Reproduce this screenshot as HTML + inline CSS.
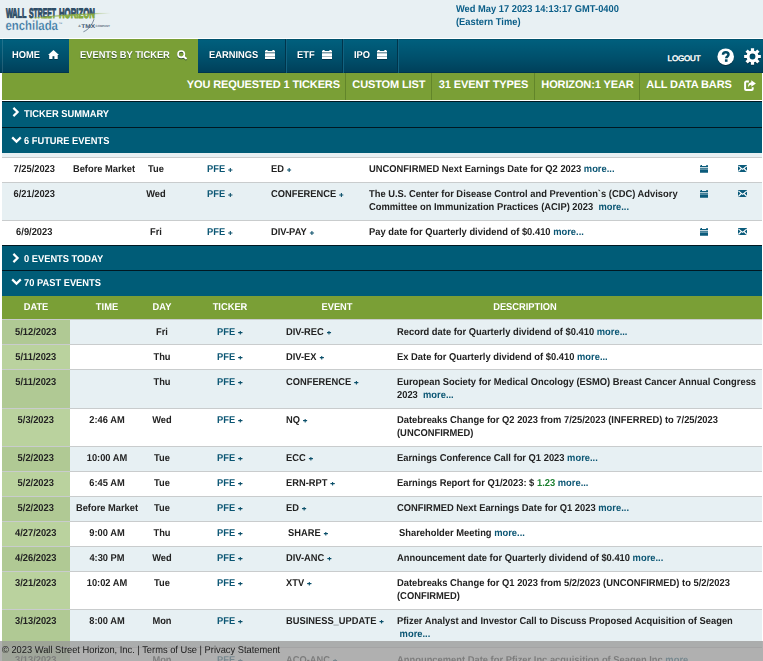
<!DOCTYPE html>
<html>
<head>
<meta charset="utf-8">
<title>Enchilada - Events By Ticker</title>
<style>
*{box-sizing:border-box;}
html,body{margin:0;padding:0;}
body{width:763px;height:661px;overflow:hidden;background:#fff;font-family:"Liberation Sans",sans-serif;font-size:10px;color:#222;position:relative;font-weight:bold;text-rendering:geometricPrecision;}
div,span{white-space:nowrap;}
#hdr{position:absolute;left:0;top:0;width:763px;height:38px;background:#e8f0f3;}
#clock{position:absolute;left:456.3px;top:3px;color:#0a5e88;line-height:13px;transform:scaleX(.931);transform-origin:0 0;}
#nav{position:absolute;left:0;top:39px;width:763px;height:34px;background:linear-gradient(#00607e 0%,#00506c 55%,#003f59 100%);box-shadow:inset 0 1px 0 rgba(0,40,60,.25),inset 0 -1px 0 rgba(0,30,50,.3);}
#nav .edge{display:none;}
.tab{position:absolute;top:0;height:34px;color:#fff;line-height:31px;text-shadow:0 1px 1px rgba(0,30,45,.55);}
.tab i{position:absolute;right:-1px;top:0;width:2px;height:34px;background:linear-gradient(90deg,#00354b 50%,#126381 50%);}
.tab.act{background:#7a9f36;}
.tab i.l{left:0;right:auto;width:1px;background:rgba(255,255,255,.13);}
.nt{position:absolute;top:11px;color:#fff;line-height:11px;transform:scaleX(.931);transform-origin:0 0;text-shadow:0 1px 1px rgba(0,30,45,.55);}
#nav svg{filter:drop-shadow(0 1px 0.5px rgba(0,30,45,.55));}
#sub{position:absolute;left:2px;top:73px;width:760px;height:27px;background:#7a9f36;}
.st{position:absolute;top:0;height:27px;line-height:25px;color:#fff;font-size:11px;letter-spacing:-0.12px;margin-left:-0.7px;}
.sv{position:absolute;top:0;width:1px;height:27px;background:#62852a;}
.sec{position:absolute;left:2px;width:760px;background:#005c77;color:#fff;border-top:1px solid #001822;}
.sec span{position:absolute;margin-top:1px;left:22.1px;transform:scaleX(.931);transform-origin:0 0;}
.sec svg{position:absolute;}
.row{position:absolute;left:2px;width:760px;background:#fff;line-height:13px;color:#222;}
.row.alt{background:#e7f0f3;}
.row .bd{position:absolute;left:0;right:0;top:0;height:1px;background:#c9cccd;}
.c{position:absolute;margin-top:1px;transform:scaleX(.931);transform-origin:0 0;}
.cc{position:absolute;margin-top:1px;text-align:center;transform:scaleX(.931);transform-origin:50% 0;}
.c.ds{transform:scaleX(.936);}
.ic{position:absolute;}
.dcell{position:absolute;left:0;top:0;bottom:0;width:68px;background:#bad29e;}
.row.alt .dcell{background:#b0c994;}
.lk{color:#0a5573;}
.pl{display:inline-block;width:5.2px;height:4px;margin-left:3px;background:#0a4f6a;vertical-align:0.4px;clip-path:polygon(0 50%,12% 35%,39% 35%,39% 0,61% 0,61% 35%,88% 35%,100% 50%,88% 65%,61% 65%,61% 100%,39% 100%,39% 65%,12% 65%);}
#thead{position:absolute;left:2px;top:296px;width:760px;height:23px;background:#7a9f36;color:#fff;line-height:22px;}
#foot{position:absolute;left:0;top:641px;width:763px;height:20px;background:rgba(152,152,152,0.77);color:#1a1a1a;font-weight:normal;line-height:19px;padding-left:2px;}
#foot span{display:inline-block;transform:scaleX(.931);transform-origin:0 0;}
</style>
</head>
<body>
<div id="hdr">
<svg id="logo" style="position:absolute;left:0;top:0" width="130" height="38" viewBox="0 0 130 38" font-family="Liberation Sans, sans-serif" letter-spacing="0">
<defs>
<clipPath id="below"><path d="M30 18.2C50 16.4 75 14.2 112 13.5V20H30Z"/></clipPath>
<clipPath id="above"><path d="M0 0H130V13.4C80 14.2 50 16.4 30 18.2H0Z"/></clipPath>
<linearGradient id="sw" x1="0" x2="1" y1="0" y2="0"><stop offset="0" stop-color="#8aad45" stop-opacity="0.5"/><stop offset="0.45" stop-color="#8aad45" stop-opacity="1"/><stop offset="0.8" stop-color="#8aad45" stop-opacity="0.8"/><stop offset="1" stop-color="#8aad45" stop-opacity="0"/></linearGradient>
</defs>
<g font-weight="bold" font-size="13.8" stroke-width="1.0" stroke-linejoin="round">
<g clip-path="url(#above)" fill="#2f4d66" stroke="#2f4d66">
<text x="5.9" y="17.8" textLength="20.6" lengthAdjust="spacingAndGlyphs">WALL</text>
<text x="28.9" y="17.8" textLength="27.1" lengthAdjust="spacingAndGlyphs">STREET</text>
<text x="59" y="17.8" textLength="35.9" lengthAdjust="spacingAndGlyphs">HORIZON</text>
</g>
<g clip-path="url(#below)" fill="#84aa3c" stroke="#84aa3c">
<text x="28.9" y="17.8" textLength="27.1" lengthAdjust="spacingAndGlyphs">STREET</text>
<text x="59" y="17.8" textLength="35.9" lengthAdjust="spacingAndGlyphs">HORIZON</text>
</g>
</g>
<path d="M33 17.9C52 15.4 78 13.3 111 13.2C80 14.6 55 16.6 33 17.9Z" fill="url(#sw)" stroke="url(#sw)" stroke-width="0.25"/>
<text x="5.5" y="29.5" font-size="13.4" fill="#2f6f9c" stroke="#e8f0f3" stroke-width="0.3" textLength="52.4" lengthAdjust="spacingAndGlyphs">enchilada</text>
<text x="58.8" y="24" font-size="2.2" fill="#6a94b4">TM</text>
<g fill="#5a6e80">
<text x="78.3" y="27.2" font-size="3.4">A</text>
<text x="81.3" y="27.5" font-size="5.6" font-weight="bold" textLength="13.8" lengthAdjust="spacingAndGlyphs" fill="#3f5872">TMX</text>
<text x="95.6" y="26.8" font-size="3.1" textLength="14.4" lengthAdjust="spacingAndGlyphs">COMPANY</text>
</g>
<path d="M94 19.2C92.5 24 89 29.5 83.4 31.8" stroke="#2d4560" stroke-width="0.6" fill="none"/>
</svg>

<div id="clock">Wed May 17 2023 14:13:17 GMT-0400<br>(Eastern Time)</div>
</div>
<div id="nav"><div class="edge"></div>
<div class="tab" style="left:2px;width:67px"><i class="l"></i></div>
<div class="tab act" style="left:69px;width:129px"></div>
<div class="tab" style="left:198px;width:88px"><i></i></div>
<div class="tab" style="left:287px;width:56px"><i></i></div>
<div class="tab" style="left:344px;width:54px"><i></i></div>
<span class="nt" style="left:12.3px">HOME</span><svg class="ic" style="left:48px;top:11px" width="11" height="9" viewBox="0 0 11 9"><path fill="#fff" d="M5.5 0L0 4.9h1.2V9h3.3V6.2h1.9V9h3.3V4.9H11z"/></svg>
<span class="nt" style="left:79.5px">EVENTS BY TICKER</span><svg class="ic" style="left:177px;top:10.5px" width="11" height="11" viewBox="0 0 11 11"><circle cx="4.2" cy="4.2" r="3.2" stroke="#fff" stroke-width="1.6" fill="none"/><path d="M6.6 6.4L9.0 8.4" stroke="#fff" stroke-width="1.9" stroke-linecap="round"/></svg>
<span class="nt" style="left:208.7px">EARNINGS</span><svg class="ic" style="left:265px;top:11px" width="10" height="9" viewBox="0 0 10 9"><path fill="#fff" d="M0 1h0.6v-1h2v1h4.8v-1h2v1h0.6v1.5h-10zM0 3.2h10v3h-10zM0 6.7h10v2.5h-10z"/><rect y="6.2" width="10" height="0.5" fill="#cfdde3"/></svg>
<span class="nt" style="left:297px">ETF</span><svg class="ic" style="left:321.7px;top:11px" width="10" height="9" viewBox="0 0 10 9"><path fill="#fff" d="M0 1h0.6v-1h2v1h4.8v-1h2v1h0.6v1.5h-10zM0 3.2h10v3h-10zM0 6.7h10v2.5h-10z"/><rect y="6.2" width="10" height="0.5" fill="#cfdde3"/></svg>
<span class="nt" style="left:353.7px">IPO</span><svg class="ic" style="left:377px;top:11px" width="10" height="9" viewBox="0 0 10 9"><path fill="#fff" d="M0 1h0.6v-1h2v1h4.8v-1h2v1h0.6v1.5h-10zM0 3.2h10v3h-10zM0 6.7h10v2.5h-10z"/><rect y="6.2" width="10" height="0.5" fill="#cfdde3"/></svg>
<span class="nt" style="left:667.6px;top:14px;font-size:8px;font-weight:normal;letter-spacing:-0.15px;transform:none;-webkit-text-stroke:0.45px #fff">LOGOUT</span>
<svg class="ic" style="left:717.3px;top:8.9px" width="17.4" height="17.4" viewBox="0 0 18 18"><circle cx="9" cy="9" r="8.6" fill="#fff"/><path d="M6.2 7.1c0-1.7 1.2-2.7 2.9-2.7 1.6 0 2.8 1 2.8 2.4 0 1.9-2.3 2-2.3 3.7" stroke="#024a64" stroke-width="2.6" fill="none"/><rect x="8.2" y="11.7" width="2.7" height="2.6" fill="#024a64"/></svg>
<svg class="ic" style="left:744.3px;top:8.5px" width="17" height="17" viewBox="0 0 17 17"><path fill="#fff" fill-rule="evenodd" d="M6.89 0.15L10.11 0.15L10.10 2.72L11.46 3.28L13.27 1.46L15.54 3.73L13.72 5.54L14.28 6.90L16.85 6.89L16.85 10.11L14.28 10.10L13.72 11.46L15.54 13.27L13.27 15.54L11.46 13.72L10.10 14.28L10.11 16.85L6.89 16.85L6.90 14.28L5.54 13.72L3.73 15.54L1.46 13.27L3.28 11.46L2.72 10.10L0.15 10.11L0.15 6.89L2.72 6.90L3.28 5.54L1.46 3.73L3.73 1.46L5.54 3.28L6.90 2.72ZM11.4 8.5a2.9 2.9 0 1 0 -5.8 0a2.9 2.9 0 1 0 5.8 0Z"/></svg>
</div>
<div id="sub">
<div class="st" style="left:185.5px">YOU REQUESTED 1 TICKERS</div><div class="sv" style="left:343px"></div>
<div class="st" style="left:351px">CUSTOM LIST</div><div class="sv" style="left:429px"></div>
<div class="st" style="left:437.5px">31 EVENT TYPES</div><div class="sv" style="left:532px"></div>
<div class="st" style="left:540px">HORIZON:1 YEAR</div><div class="sv" style="left:637px"></div>
<div class="st" style="left:645px">ALL DATA BARS</div>
<svg class="ic" style="left:742.2px;top:7.4px" width="12" height="11" viewBox="0 0 12 11"><path d="M8.7 7.2v1.7a1 1 0 0 1 -1 1H2.1a1 1 0 0 1 -1 -1V2.6a1 1 0 0 1 1 -1h2.8" stroke="#fff" stroke-width="2" fill="none"/><path fill="#fff" d="M7.3 0.2L11.9 3.5L7.3 6.8V4.7C5.6 4.7 4.9 5.6 4.4 7.4C3.6 4.6 5.2 2.4 7.3 2.3z"/></svg>
</div>
<div class="sec" style="top:101px;height:26px;line-height:11px"><svg style="left:10.3px;top:5.4px" width="8" height="10" viewBox="0 0 8 10"><path d="M1.4 0.9L5.6 5L1.4 9.1" stroke="#fff" stroke-width="2.2" fill="none"/></svg><span style="top:5.9px">TICKER SUMMARY</span></div>
<div class="sec" style="top:127px;height:26px;line-height:11px"><svg style="left:8.8px;top:7.8px" width="11" height="8" viewBox="0 0 11 8"><path d="M1.2 1.4L5.5 5.6L9.8 1.4" stroke="#fff" stroke-width="2.2" fill="none"/></svg><span style="top:7.1px">6 FUTURE EVENTS</span></div>
<div style="position:absolute;left:2px;top:153px;width:760px;height:4px;background:#e8f0f3"></div>
<div class="row" style="top:157px;height:25px">
<div class="cc" style="left:0;width:64.5px;top:5.4px">7/25/2023</div>
<div class="cc" style="left:52px;width:100px;top:5.4px">Before Market</div>
<div class="cc" style="left:124px;width:60px;top:5.4px">Tue</div>
<div class="c lk" style="left:204.7px;top:5.4px">PFE<span class="pl"></span></div>
<div class="c" style="left:268.5px;top:5.4px">ED<span class="pl"></span></div>
<div class="c ds" style="left:366.5px;top:5.4px">UNCONFIRMED Next Earnings Date for Q2 2023 <span class="lk">more...</span></div>
<svg class="ic" style="left:697.9px;top:8px" width="8.3" height="7.9" viewBox="0 0 8.3 7.9"><path fill="#0b5b7b" d="M0 1h0.5v-1h1.5v1h4.3v-1h1.5v1h0.5v1.2h-8.3zM0 3.25h8.3v1.15h-8.3zM0 5h8.3v2.8h-8.3z"/><rect y="4.4" width="8.3" height="0.6" fill="#0b5b7b" opacity="0.55"/></svg>
<svg class="ic" style="left:736.2px;top:7.9px" width="9.3" height="7.1" viewBox="0 0 9.3 7.1"><rect width="9.3" height="7.1" fill="#0b5b7b"/><path d="M0.4 0.8L4.65 4.4L8.9 0.8M0.4 6.5L3.3 3.5M8.9 6.5L6 3.5" stroke="#fff" stroke-width="1.1" fill="none"/></svg>
<div class="bd"></div>
</div>
<div class="row alt" style="top:182px;height:38px">
<div class="cc" style="left:0;width:64.5px;top:5.4px">6/21/2023</div>
<div class="cc" style="left:52px;width:100px;top:5.4px"></div>
<div class="cc" style="left:124px;width:60px;top:5.4px">Wed</div>
<div class="c lk" style="left:204.7px;top:5.4px">PFE<span class="pl"></span></div>
<div class="c" style="left:268.5px;top:5.4px">CONFERENCE<span class="pl"></span></div>
<div class="c ds" style="left:366.5px;top:5.4px">The U.S. Center for Disease Control and Prevention`s (CDC) Advisory<br>Committee on Immunization Practices (ACIP) 2023 &nbsp;<span class="lk">more...</span></div>
<svg class="ic" style="left:697.9px;top:8px" width="8.3" height="7.9" viewBox="0 0 8.3 7.9"><path fill="#0b5b7b" d="M0 1h0.5v-1h1.5v1h4.3v-1h1.5v1h0.5v1.2h-8.3zM0 3.25h8.3v1.15h-8.3zM0 5h8.3v2.8h-8.3z"/><rect y="4.4" width="8.3" height="0.6" fill="#0b5b7b" opacity="0.55"/></svg>
<svg class="ic" style="left:736.2px;top:7.9px" width="9.3" height="7.1" viewBox="0 0 9.3 7.1"><rect width="9.3" height="7.1" fill="#0b5b7b"/><path d="M0.4 0.8L4.65 4.4L8.9 0.8M0.4 6.5L3.3 3.5M8.9 6.5L6 3.5" stroke="#fff" stroke-width="1.1" fill="none"/></svg>
<div class="bd"></div>
</div>
<div class="row" style="top:220px;height:25px">
<div class="cc" style="left:0;width:64.5px;top:5.4px">6/9/2023</div>
<div class="cc" style="left:52px;width:100px;top:5.4px"></div>
<div class="cc" style="left:124px;width:60px;top:5.4px">Fri</div>
<div class="c lk" style="left:204.7px;top:5.4px">PFE<span class="pl"></span></div>
<div class="c" style="left:268.5px;top:5.4px">DIV-PAY<span class="pl"></span></div>
<div class="c ds" style="left:366.5px;top:5.4px">Pay date for Quarterly dividend of $0.410 <span class="lk">more...</span></div>
<svg class="ic" style="left:697.9px;top:8px" width="8.3" height="7.9" viewBox="0 0 8.3 7.9"><path fill="#0b5b7b" d="M0 1h0.5v-1h1.5v1h4.3v-1h1.5v1h0.5v1.2h-8.3zM0 3.25h8.3v1.15h-8.3zM0 5h8.3v2.8h-8.3z"/><rect y="4.4" width="8.3" height="0.6" fill="#0b5b7b" opacity="0.55"/></svg>
<svg class="ic" style="left:736.2px;top:7.9px" width="9.3" height="7.1" viewBox="0 0 9.3 7.1"><rect width="9.3" height="7.1" fill="#0b5b7b"/><path d="M0.4 0.8L4.65 4.4L8.9 0.8M0.4 6.5L3.3 3.5M8.9 6.5L6 3.5" stroke="#fff" stroke-width="1.1" fill="none"/></svg>
<div class="bd"></div>
</div>
<div class="sec" style="top:245px;height:25px;line-height:11px"><svg style="left:10.3px;top:6.5px" width="8" height="10" viewBox="0 0 8 10"><path d="M1.4 0.9L5.6 5L1.4 9.1" stroke="#fff" stroke-width="2.2" fill="none"/></svg><span style="top:7.0px">0 EVENTS TODAY</span></div>
<div class="sec" style="top:270px;height:26px;line-height:11px"><svg style="left:8.8px;top:6.8px" width="11" height="8" viewBox="0 0 11 8"><path d="M1.2 1.4L5.5 5.6L9.8 1.4" stroke="#fff" stroke-width="2.2" fill="none"/></svg><span style="top:6.1px">70 PAST EVENTS</span></div>
<div id="thead">
<div class="cc" style="left:-16.5px;width:100px;top:0">DATE</div>
<div class="cc" style="left:55px;width:100px;top:0">TIME</div>
<div class="cc" style="left:109.5px;width:100px;top:0">DAY</div>
<div class="cc" style="left:178px;width:100px;top:0">TICKER</div>
<div class="cc" style="left:284.5px;width:100px;top:0">EVENT</div>
<div class="cc" style="left:473px;width:100px;top:0">DESCRIPTION</div>
</div>
<div class="row alt" style="top:319px;height:25px">
<div class="dcell"></div>
<div class="cc" style="left:0;width:67.5px;top:6px">5/12/2023</div>
<div class="cc" style="left:55px;width:100px;top:6px"></div>
<div class="cc" style="left:129.5px;width:60px;top:6px">Fri</div>
<div class="c lk" style="left:215px;top:6px">PFE<span class="pl"></span></div>
<div class="c" style="left:284.2px;top:6px">DIV-REC<span class="pl"></span></div>
<div class="c ds" style="left:395.1px;top:6px">Record date for Quarterly dividend of $0.410 <span class="lk">more...</span></div>
<div class="bd"></div>
</div>
<div class="row" style="top:344px;height:25px">
<div class="dcell"></div>
<div class="cc" style="left:0;width:67.5px;top:6px">5/11/2023</div>
<div class="cc" style="left:55px;width:100px;top:6px"></div>
<div class="cc" style="left:129.5px;width:60px;top:6px">Thu</div>
<div class="c lk" style="left:215px;top:6px">PFE<span class="pl"></span></div>
<div class="c" style="left:284.2px;top:6px">DIV-EX<span class="pl"></span></div>
<div class="c ds" style="left:395.1px;top:6px">Ex Date for Quarterly dividend of $0.410 <span class="lk">more...</span></div>
<div class="bd"></div>
</div>
<div class="row alt" style="top:369px;height:39px">
<div class="dcell"></div>
<div class="cc" style="left:0;width:67.5px;top:6px">5/11/2023</div>
<div class="cc" style="left:55px;width:100px;top:6px"></div>
<div class="cc" style="left:129.5px;width:60px;top:6px">Thu</div>
<div class="c lk" style="left:215px;top:6px">PFE<span class="pl"></span></div>
<div class="c" style="left:284.2px;top:6px">CONFERENCE<span class="pl"></span></div>
<div class="c ds" style="left:395.1px;top:6px">European Society for Medical Oncology (ESMO) Breast Cancer Annual Congress<br>2023 &nbsp;<span class="lk">more...</span></div>
<div class="bd"></div>
</div>
<div class="row" style="top:408px;height:38px">
<div class="dcell"></div>
<div class="cc" style="left:0;width:67.5px;top:5px">5/3/2023</div>
<div class="cc" style="left:55px;width:100px;top:5px">2:46 AM</div>
<div class="cc" style="left:129.5px;width:60px;top:5px">Wed</div>
<div class="c lk" style="left:215px;top:5px">PFE<span class="pl"></span></div>
<div class="c" style="left:284.2px;top:5px">NQ<span class="pl"></span></div>
<div class="c ds" style="left:395.1px;top:5px">Datebreaks Change for Q2 2023 from 7/25/2023 (INFERRED) to 7/25/2023<br>(UNCONFIRMED)</div>
<div class="bd"></div>
</div>
<div class="row alt" style="top:446px;height:25px">
<div class="dcell"></div>
<div class="cc" style="left:0;width:67.5px;top:5px">5/2/2023</div>
<div class="cc" style="left:55px;width:100px;top:5px">10:00 AM</div>
<div class="cc" style="left:129.5px;width:60px;top:5px">Tue</div>
<div class="c lk" style="left:215px;top:5px">PFE<span class="pl"></span></div>
<div class="c" style="left:284.2px;top:5px">ECC<span class="pl"></span></div>
<div class="c ds" style="left:395.1px;top:5px">Earnings Conference Call for Q1 2023 <span class="lk">more...</span></div>
<div class="bd"></div>
</div>
<div class="row" style="top:471px;height:25px">
<div class="dcell"></div>
<div class="cc" style="left:0;width:67.5px;top:5px">5/2/2023</div>
<div class="cc" style="left:55px;width:100px;top:5px">6:45 AM</div>
<div class="cc" style="left:129.5px;width:60px;top:5px">Tue</div>
<div class="c lk" style="left:215px;top:5px">PFE<span class="pl"></span></div>
<div class="c" style="left:284.2px;top:5px">ERN-RPT<span class="pl"></span></div>
<div class="c ds" style="left:395.1px;top:5px">Earnings Report for Q1/2023: $ <span style="color:#1a7f2e">1.23</span> <span class="lk">more...</span></div>
<div class="bd"></div>
</div>
<div class="row alt" style="top:496px;height:25px">
<div class="dcell"></div>
<div class="cc" style="left:0;width:67.5px;top:5px">5/2/2023</div>
<div class="cc" style="left:55px;width:100px;top:5px">Before Market</div>
<div class="cc" style="left:129.5px;width:60px;top:5px">Tue</div>
<div class="c lk" style="left:215px;top:5px">PFE<span class="pl"></span></div>
<div class="c" style="left:284.2px;top:5px">ED<span class="pl"></span></div>
<div class="c ds" style="left:395.1px;top:5px">CONFIRMED Next Earnings Date for Q1 2023 <span class="lk">more...</span></div>
<div class="bd"></div>
</div>
<div class="row" style="top:521px;height:25px">
<div class="dcell"></div>
<div class="cc" style="left:0;width:67.5px;top:5px">4/27/2023</div>
<div class="cc" style="left:55px;width:100px;top:5px">9:00 AM</div>
<div class="cc" style="left:129.5px;width:60px;top:5px">Thu</div>
<div class="c lk" style="left:215px;top:5px">PFE<span class="pl"></span></div>
<div class="c" style="left:285.5px;top:5px">SHARE<span class="pl"></span></div>
<div class="c ds" style="left:396.5px;top:5px">Shareholder Meeting <span class="lk">more...</span></div>
<div class="bd"></div>
</div>
<div class="row alt" style="top:546px;height:25px">
<div class="dcell"></div>
<div class="cc" style="left:0;width:67.5px;top:5px">4/26/2023</div>
<div class="cc" style="left:55px;width:100px;top:5px">4:30 PM</div>
<div class="cc" style="left:129.5px;width:60px;top:5px">Wed</div>
<div class="c lk" style="left:215px;top:5px">PFE<span class="pl"></span></div>
<div class="c" style="left:284.2px;top:5px">DIV-ANC<span class="pl"></span></div>
<div class="c ds" style="left:395.1px;top:5px">Announcement date for Quarterly dividend of $0.410 <span class="lk">more...</span></div>
<div class="bd"></div>
</div>
<div class="row" style="top:571px;height:38px">
<div class="dcell"></div>
<div class="cc" style="left:0;width:67.5px;top:5px">3/21/2023</div>
<div class="cc" style="left:55px;width:100px;top:5px">10:02 AM</div>
<div class="cc" style="left:129.5px;width:60px;top:5px">Tue</div>
<div class="c lk" style="left:215px;top:5px">PFE<span class="pl"></span></div>
<div class="c" style="left:284.2px;top:5px">XTV<span class="pl"></span></div>
<div class="c ds" style="left:395.1px;top:5px">Datebreaks Change for Q1 2023 from 5/2/2023 (UNCONFIRMED) to 5/2/2023<br>(CONFIRMED)</div>
<div class="bd"></div>
</div>
<div class="row alt" style="top:609px;height:38px">
<div class="dcell"></div>
<div class="cc" style="left:0;width:67.5px;top:5px">3/13/2023</div>
<div class="cc" style="left:55px;width:100px;top:5px">8:00 AM</div>
<div class="cc" style="left:129.5px;width:60px;top:5px">Mon</div>
<div class="c lk" style="left:215px;top:5px">PFE<span class="pl"></span></div>
<div class="c" style="left:284.2px;top:5px">BUSINESS_UPDATE<span class="pl"></span></div>
<div class="c ds" style="left:395.1px;top:5px">Pfizer Analyst and Investor Call to Discuss Proposed Acquisition of Seagen<br>&nbsp;<span class="lk">more...</span></div>
<div class="bd"></div>
</div>
<div class="row" style="top:647px;height:25px">
<div class="dcell"></div>
<div class="cc" style="left:0;width:67.5px;top:6px">3/13/2023</div>
<div class="cc" style="left:55px;width:100px;top:6px"></div>
<div class="cc" style="left:129.5px;width:60px;top:6px">Mon</div>
<div class="c lk" style="left:215px;top:6px">PFE<span class="pl"></span></div>
<div class="c" style="left:284.2px;top:6px">ACQ-ANC<span class="pl"></span></div>
<div class="c ds" style="left:395.1px;top:6px">Announcement Date for Pfizer Inc acquisition of Seagen Inc <span class="lk">more...</span></div>
<div class="bd"></div>
</div>
<div id="foot"><span>© 2023 Wall Street Horizon, Inc. | Terms of Use | Privacy Statement</span></div>
</body>
</html>
